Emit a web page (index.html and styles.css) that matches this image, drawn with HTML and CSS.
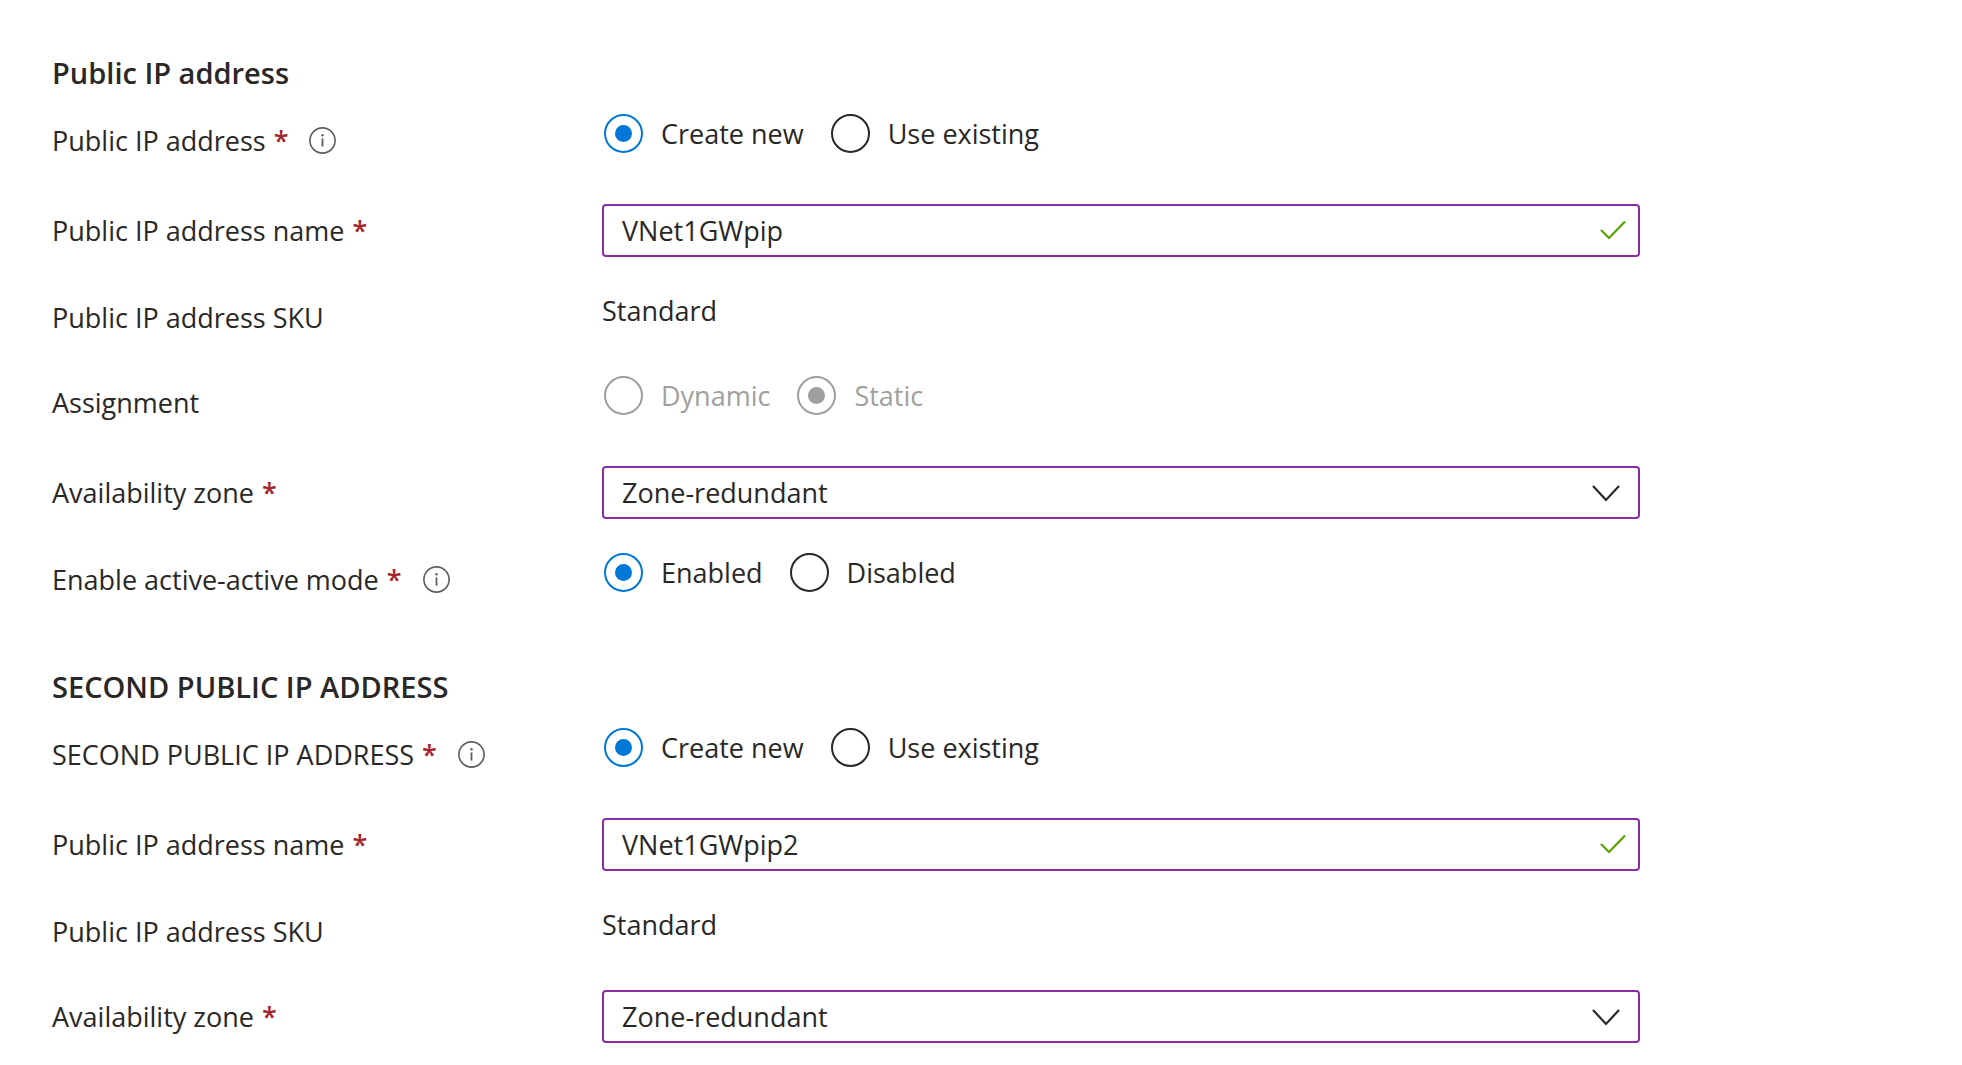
FILE: index.html
```html
<!DOCTYPE html>
<html lang="en">
<head>
<meta charset="utf-8">
<title>Public IP address</title>
<link rel="stylesheet" href="styles.css">
</head>
<body>
<svg class="sprite" aria-hidden="true">
  <symbol id="info" viewBox="0 0 27 27"><circle cx="13.5" cy="13.5" r="12.6" fill="none" stroke="currentColor" stroke-width="1.6"/><path d="M13.5 11.4V19.6" stroke="currentColor" stroke-width="1.8"/><circle cx="13.5" cy="8.3" r="1.2" fill="currentColor"/></symbol>
  <symbol id="check" viewBox="0 0 26 20"><path d="M1 10l8 8L25 1.5" fill="none" stroke="currentColor" stroke-width="2.2"/></symbol>
  <symbol id="chevron" viewBox="0 0 28 17"><path d="M1 1l13 14L27 1" fill="none" stroke="currentColor" stroke-width="2.2"/></symbol>
</svg>
<form class="form">
  <section class="section">
    <h2 class="heading">Public IP address</h2>
    <div class="row row-choice" role="radiogroup" aria-labelledby="ip-label">
      <div class="caption"><span id="ip-label">Public IP address</span><span class="required">*</span><button class="info" type="button" aria-label="About public IP address"><svg><use href="#info"/></svg></button></div>
      <div class="choices">
        <label class="choice"><input type="radio" name="ip" checked>Create new</label>
        <label class="choice"><input type="radio" name="ip">Use existing</label>
      </div>
    </div>
    <div class="row">
      <label class="caption" for="name1">Public IP address name<span class="required">*</span></label>
      <div class="field"><input class="control" id="name1" type="text" value="VNet1GWpip"><svg class="check"><use href="#check"/></svg></div>
    </div>
    <div class="row row-text">
      <div class="caption">Public IP address SKU</div>
      <div class="value">Standard</div>
    </div>
    <div class="row row-choice" role="radiogroup" aria-labelledby="assign-label">
      <div class="caption" id="assign-label">Assignment</div>
      <div class="choices">
        <label class="choice choice-disabled"><input type="radio" name="assign" disabled>Dynamic</label>
        <label class="choice choice-disabled"><input type="radio" name="assign" disabled checked>Static</label>
      </div>
    </div>
    <div class="row">
      <label class="caption" for="zone1">Availability zone<span class="required">*</span></label>
      <div class="field"><select class="control" id="zone1"><option>Zone-redundant</option></select><svg class="chevron"><use href="#chevron"/></svg></div>
    </div>
    <div class="row row-choice" role="radiogroup" aria-labelledby="mode-label">
      <div class="caption"><span id="mode-label">Enable active-active mode</span><span class="required">*</span><button class="info" type="button" aria-label="About active-active mode"><svg><use href="#info"/></svg></button></div>
      <div class="choices">
        <label class="choice"><input type="radio" name="mode" checked>Enabled</label>
        <label class="choice"><input type="radio" name="mode">Disabled</label>
      </div>
    </div>
  </section>
  <section class="section">
    <h2 class="heading">SECOND PUBLIC IP ADDRESS</h2>
    <div class="row row-choice" role="radiogroup" aria-labelledby="ip2-label">
      <div class="caption"><span id="ip2-label">SECOND PUBLIC IP ADDRESS</span><span class="required">*</span><button class="info" type="button" aria-label="About second public IP address"><svg><use href="#info"/></svg></button></div>
      <div class="choices">
        <label class="choice"><input type="radio" name="ip2" checked>Create new</label>
        <label class="choice"><input type="radio" name="ip2">Use existing</label>
      </div>
    </div>
    <div class="row">
      <label class="caption" for="name2">Public IP address name<span class="required">*</span></label>
      <div class="field"><input class="control" id="name2" type="text" value="VNet1GWpip2"><svg class="check"><use href="#check"/></svg></div>
    </div>
    <div class="row row-text">
      <div class="caption">Public IP address SKU</div>
      <div class="value">Standard</div>
    </div>
    <div class="row">
      <label class="caption" for="zone2">Availability zone<span class="required">*</span></label>
      <div class="field"><select class="control" id="zone2"><option>Zone-redundant</option></select><svg class="chevron"><use href="#chevron"/></svg></div>
    </div>
  </section>
</form>
</body>
</html>
```
FILE: styles.css
```css
* { box-sizing: border-box; }
body {
  margin: 0;
  background: #fff;
  color: #292827;
  font: 27px/39px "Segoe UI", "Open Sans", "Noto Sans", sans-serif;
}
.sprite { display: none; }
.form {
  display: grid;
  gap: 24px;
  max-width: 1640px;
  padding: 53px 0 0 52px;
}
.heading { margin: 0 0 22px; font-size: 29px; font-weight: 600; }
.row {
  display: grid;
  grid-template-columns: 550px minmax(0, 1fr);
  align-items: start;
  min-height: 87px;
}
.row-choice { min-height: 90px; }
.row-text { min-height: 85px; }
.section:last-child .row:last-child { min-height: 0; }
.caption { display: flex; align-items: center; padding-top: 7px; }
.required { margin-left: 8px; color: #a4262c; font-weight: 600; }
.info {
  display: flex;
  margin-left: 21px;
  padding: 0;
  border: 0;
  background: none;
  color: #605e5c;
}
.info svg { width: 27px; height: 27px; }
.choices { display: flex; gap: 27px; padding-left: 2px; }
.choice { display: flex; align-items: center; gap: 18px; }
.choice input {
  display: grid;
  place-items: center;
  appearance: none;
  width: 39px;
  height: 39px;
  margin: 0;
  border: 2px solid #292827;
  border-radius: 50%;
}
.choice input:checked { border-color: #0078d7; color: #0078d7; }
.choice input:checked::before {
  content: "";
  width: 17px;
  height: 17px;
  border-radius: 50%;
  background: currentColor;
}
.choice-disabled { color: #a19f9d; }
.choice input:disabled { border-color: #a19f9d; color: #a19f9d; }
.field { position: relative; }
.control {
  display: block;
  appearance: none;
  width: 100%;
  height: 53px;
  margin: 0;
  padding: 0 60px 0 18px;
  border: 2px solid #8a2da5;
  border-radius: 4px;
  outline: 0;
  background: #fff;
  color: inherit;
  font: inherit;
}
.check, .chevron { position: absolute; pointer-events: none; }
.check { top: 16px; right: 14px; width: 26px; height: 20px; color: #57a300; }
.chevron { top: 19px; right: 20px; width: 28px; height: 17px; }
```
